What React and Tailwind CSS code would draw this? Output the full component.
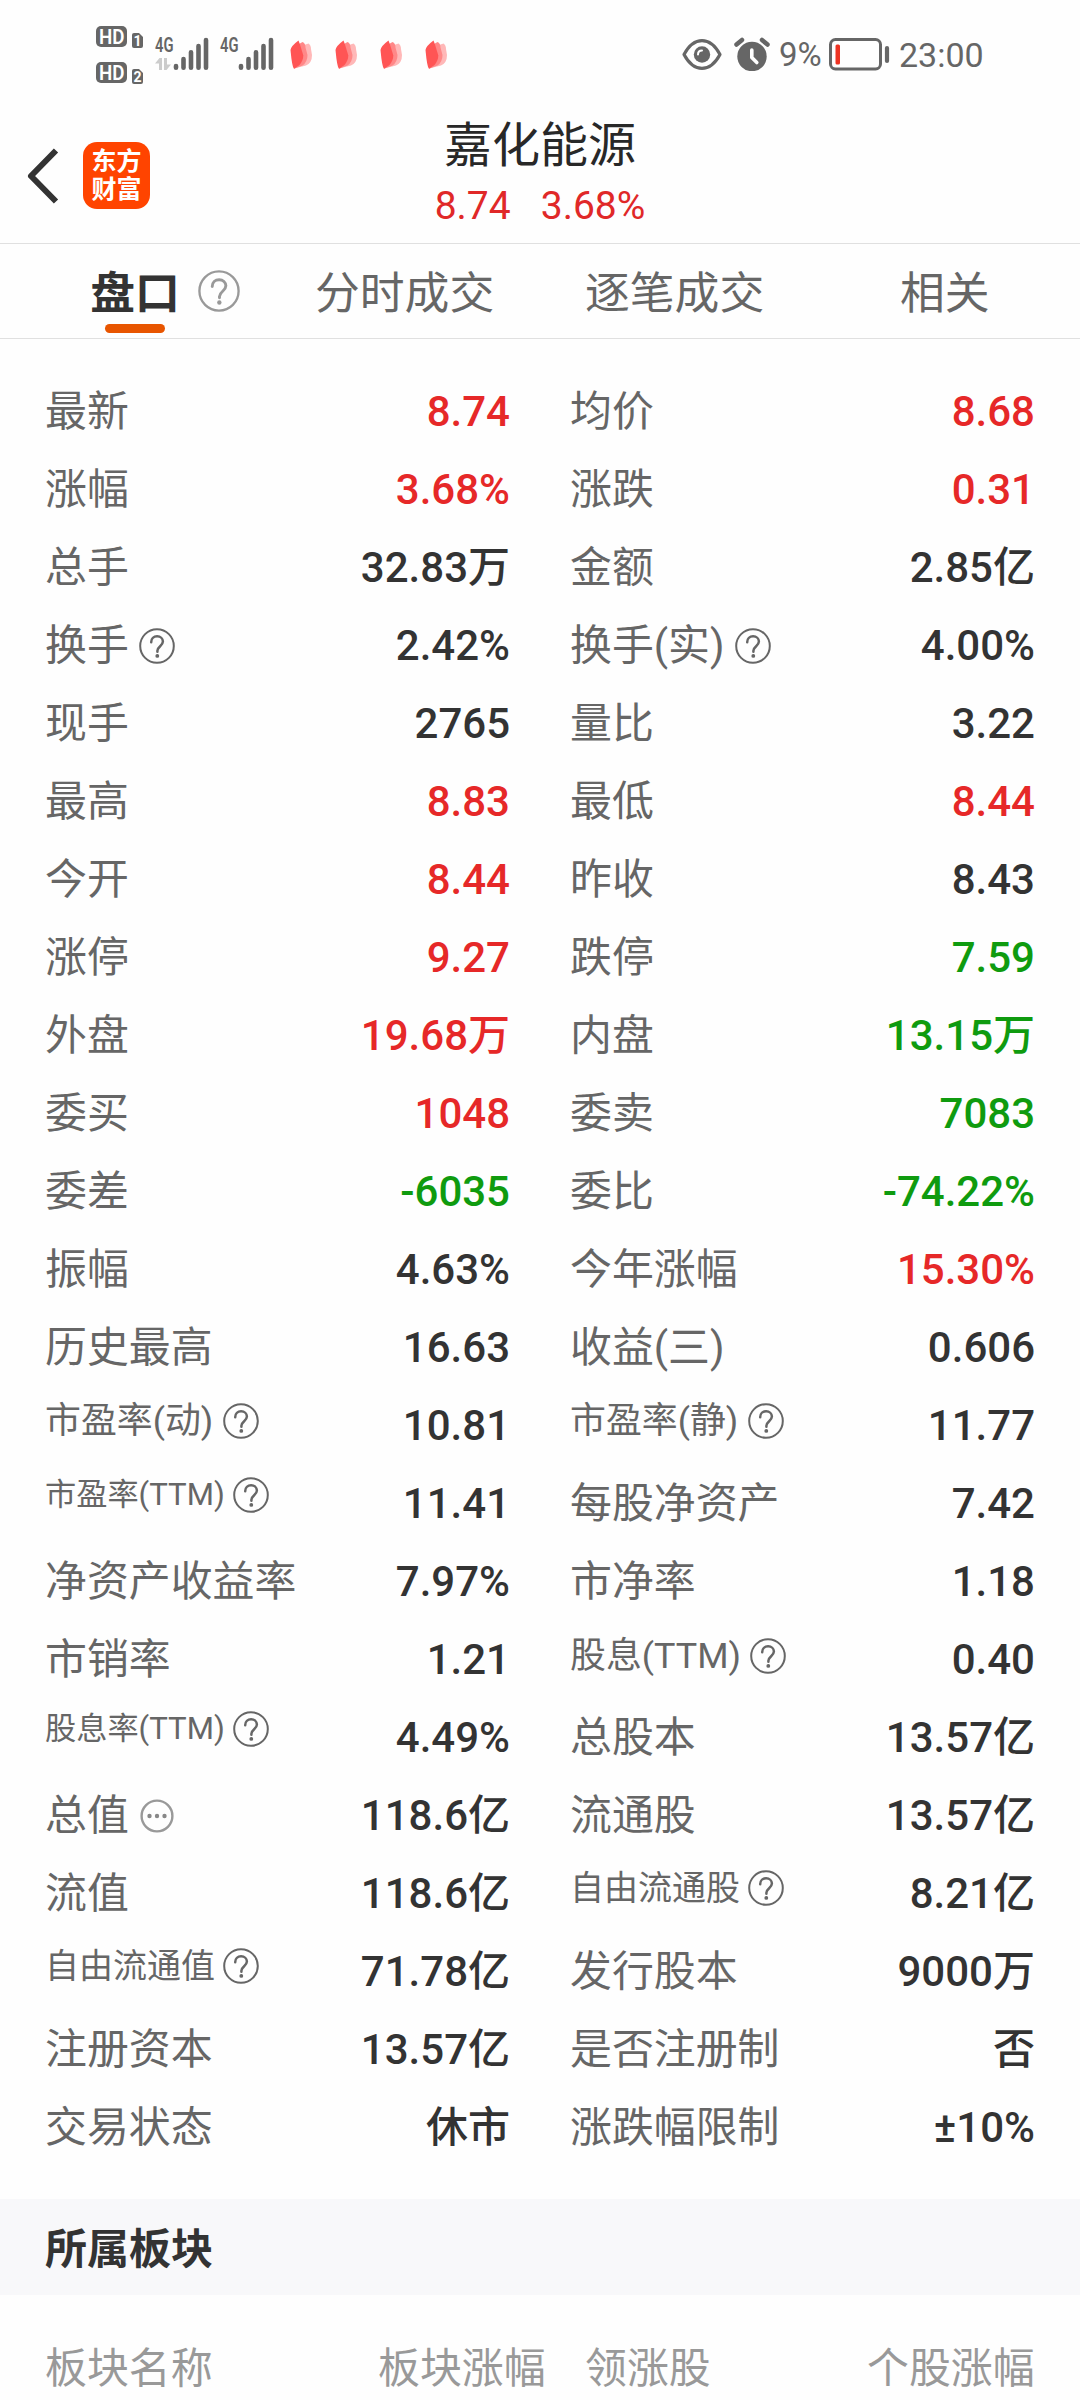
import React from "react";

const TONES = {
  red: "text-[#e62828]",
  green: "text-[#0f9b0f]",
  dark: "text-[#333333]",
};

// size: label size step; the bottom padding lifts small labels above the row's centre line
const LABELS = {
  base: "text-[41.9px]",
  md: "text-[35.9px] pb-[10px]",
  mid: "text-[35.9px] pb-[9px]",
  sm: "text-[34px] pb-[13px]",
  xs: "text-[31.2px] pb-[18px]",
};

const ROWS = [
  [["最新", "8.74", "red"], ["均价", "8.68", "red"]],
  [["涨幅", "3.68%", "red"], ["涨跌", "0.31", "red"]],
  [["总手", "32.83万", "dark"], ["金额", "2.85亿", "dark"]],
  [["换手", "2.42%", "dark", "base", "help", "ml-[10px]"], ["换手(实)", "4.00%", "dark", "base", "help", "ml-[10px]"]],
  [["现手", "2765", "dark"], ["量比", "3.22", "dark"]],
  [["最高", "8.83", "red"], ["最低", "8.44", "red"]],
  [["今开", "8.44", "red"], ["昨收", "8.43", "dark"]],
  [["涨停", "9.27", "red"], ["跌停", "7.59", "green"]],
  [["外盘", "19.68万", "red"], ["内盘", "13.15万", "green"]],
  [["委买", "1048", "red"], ["委卖", "7083", "green"]],
  [["委差", "-6035", "green"], ["委比", "-74.22%", "green"]],
  [["振幅", "4.63%", "dark"], ["今年涨幅", "15.30%", "red"]],
  [["历史最高", "16.63", "dark"], ["收益(三)", "0.606", "dark"]],
  [["市盈率(动)", "10.81", "dark", "md", "help", "ml-[10px]"], ["市盈率(静)", "11.77", "dark", "md", "help", "ml-[10px]"]],
  [["市盈率(TTM)", "11.41", "dark", "xs", "help", "ml-[8px]"], ["每股净资产", "7.42", "dark"]],
  [["净资产收益率", "7.97%", "dark"], ["市净率", "1.18", "dark"]],
  [["市销率", "1.21", "dark"], ["股息(TTM)", "0.40", "dark", "mid", "help", "ml-[9px]"]],
  [["股息率(TTM)", "4.49%", "dark", "xs", "help", "ml-[8px]"], ["总股本", "13.57亿", "dark"]],
  [["总值", "118.6亿", "dark", "base", "more", "ml-[11px]"], ["流通股", "13.57亿", "dark"]],
  [["流值", "118.6亿", "dark"], ["自由流通股", "8.21亿", "dark", "sm", "help", "ml-[8px]"]],
  [["自由流通值", "71.78亿", "dark", "sm", "help", "ml-[8px]"], ["发行股本", "9000万", "dark"]],
  [["注册资本", "13.57亿", "dark"], ["是否注册制", "否", "dark"]],
  [["交易状态", "休市", "dark"], ["涨跌幅限制", "±10%", "dark"]],
];

function HelpIcon({ className }) {
  return (
    <svg viewBox="0 0 36 36" className={className} fill="none" stroke="currentColor" strokeWidth="2">
      <circle cx="18" cy="18" r="16.8" />
      <path d="M12.200 14.200c0-3.600 2.600-5.900 5.900-5.900s5.800 2.300 5.800 5.300c0 4.400-5.500 4.800-5.500 9.200v1" strokeWidth="2.500" strokeLinecap="round" />
      <circle cx="18.3" cy="27.9" r="1.9" fill="currentColor" stroke="none" />
    </svg>
  );
}

function MoreIcon({ className }) {
  return (
    <svg viewBox="0 0 34 34" className={className} fill="none" stroke="#999999" strokeWidth="2.4">
      <circle cx="17" cy="17" r="15.4" />
      <g fill="#888888" stroke="none">
        <circle cx="9.5" cy="17" r="2.2" />
        <circle cx="17" cy="17" r="2.2" />
        <circle cx="24.5" cy="17" r="2.2" />
      </g>
    </svg>
  );
}

function HdBadge({ sim }) {
  return (
    <svg width="50" height="30" viewBox="0 0 50 30" className="overflow-visible">
      <rect x="0" y="4" width="31" height="21" rx="5" fill="#666" />
      <text x="3" y="21.800" textLength="25.500" lengthAdjust="spacingAndGlyphs" fontSize="20.500" fontWeight="600" fill="#fff">HD</text>
      <path d="M36 13q0-2 2-2h5l4 4v9q0 2-2 2h-7q-2 0-2-2z" fill="#666" />
      <text x="41.500" y="23.800" textAnchor="middle" fontSize="14" fontWeight="700" fill="#fff">{sim}</text>
    </svg>
  );
}

function Signal({ arrows }) {
  return (
    <svg width="54" height="46" viewBox="0 -10 54 46" className="overflow-visible">
      <text x="0" y="17" textLength="18.5" lengthAdjust="spacingAndGlyphs" fontSize="20.5" fontWeight="600" fill="#666">4G</text>
      {arrows && (
        <g fill="#cccccc">
          <path d="M0 28.500l4.500-5.500H7v12H4v-6.500z" />
          <path d="M9 23h3v6.500h4L11.500 35H9z" />
        </g>
      )}
      <g stroke="#666" strokeWidth="4.600" strokeLinecap="round">
        <path d="M21 31v1.700M28.500 24v8.700M36 17.300v15.400M43.500 11v21.700M51 5v27.700" />
      </g>
    </svg>
  );
}

function Petals() {
  return (
    <svg width="24" height="30" viewBox="0 0 24 30">
      <path d="M4 28.500L11 6l7.500-2.500Q21 5 21 9l1 6q0 8-6 10.500L4 28.500z" fill="#ffb8b8" />
      <path d="M4 28.700L9 4l3.500-2Q15.500 3 15.500 7.500l2 7.500q0 7-5 10.500z" fill="#ff8888" />
      <path d="M0.500 10Q1 6 8.500 0.500L10 4.500l3.300 11q0 5-3.800 9.500L4 28.700Q2 27 0.500 10z" fill="#ff5555" />
    </svg>
  );
}

function StatusBar() {
  return (
    <div className="flex h-[110px] items-start justify-between pl-24 pr-[96px] text-[#666]">
      <div className="flex">
        <div className="mt-[22px] flex w-[59px] flex-col gap-[6px]">
          <HdBadge sim="1" />
          <HdBadge sim="2" />
        </div>
        <div className="mt-[25px] flex gap-[11px]">
          <Signal arrows />
          <Signal />
        </div>
        <div className="ml-[16px] mt-[40px] flex gap-[21px]">
          <Petals />
          <Petals />
          <Petals />
          <Petals />
        </div>
      </div>
      <div className="flex pt-[37px]">
        <svg width="40" height="34" viewBox="0 0 40 34" fill="none" stroke="#666">
          <path d="M2 17.500C12-1 28-1 38 17.500C28 36 12 36 2 17.500z" strokeWidth="3.200" strokeLinejoin="round" />
          <circle cx="20" cy="17.500" r="8.200" fill="#666" stroke="none" />
          <path d="M16 17.500q0-4 4-4" stroke="#fff" strokeWidth="2" strokeLinecap="round" />
        </svg>
        <svg width="36" height="34" viewBox="0 0 36 34" className="ml-[12px]">
          <circle cx="18" cy="19.500" r="14.700" fill="#666" />
          <path d="M2.500 7.500l5.500-4.500M33.500 7.500L28 3" stroke="#666" strokeWidth="4.500" strokeLinecap="round" />
          <path d="M17.800 13v7.500l5 5" stroke="#fff" strokeWidth="3.600" fill="none" strokeLinecap="round" strokeLinejoin="round" />
        </svg>
        <span className="ml-[9px] w-[44px] text-[33px] leading-[36px]">9%</span>
        <svg width="62" height="34" viewBox="0 0 62 34" className="ml-[6px]">
          <rect x="1.500" y="2.500" width="50" height="29.500" rx="5" fill="none" stroke="#666" strokeWidth="3" />
          <rect x="6.500" y="7.500" width="4.500" height="20" rx="1.500" fill="#ee3322" />
          <path d="M58 11v13" stroke="#666" strokeWidth="4.200" strokeLinecap="round" />
        </svg>
        <span className="ml-[8px] w-[85px] text-[34px] leading-[36px]">23:00</span>
      </div>
    </div>
  );
}

function Header() {
  return (
    <header className="grid h-[134px] grid-cols-[1fr_auto_1fr] border-b border-[#e0e0e0]">
      <div className="flex items-start pl-[26px] pt-[32px]">
        <svg width="34" height="56" viewBox="0 0 34 56" fill="none" stroke="#333" strokeWidth="6" className="mt-[6px]">
          <path d="M30 2.500L5 28l25 25.500" strokeLinejoin="round" />
        </svg>
        <div className="ml-[23px] flex h-[67px] w-[67px] flex-col items-center justify-center rounded-[14px] bg-[#ff4400] text-[25px] font-bold leading-[28px] text-white">
          <span>东方</span>
          <span>财富</span>
        </div>
      </div>
      <div className="flex flex-col items-center">
        <h1 className="mt-[8px] text-[48px] leading-[56px] text-[#282828]">嘉化能源</h1>
        <div className="mt-[9px] flex gap-[30px] text-[39px] leading-[46px] text-[#e02828]">
          <span>8.74</span>
          <span>3.68%</span>
        </div>
      </div>
      <div />
    </header>
  );
}

function Tabs() {
  return (
    <nav className="flex h-[95px] border-b border-[#e0e0e0] text-[44.800px] leading-[60px] text-[#666]">
      <div className="ml-[90px] mt-5 flex w-[225px]">
        <div className="flex w-[90px] flex-col items-center font-bold text-[#333]">
          <span className="h-[60px]">盘口</span>
          <span className="h-[9px] w-[60px] rounded-full bg-[#e85500]" />
        </div>
        <HelpIcon className="ml-[18px] mt-[6px] size-[42px] text-[#999]" />
      </div>
      <span className="mt-5 w-[270px]">分时成交</span>
      <span className="mt-5 w-[315px]">逐笔成交</span>
      <span className="mt-5">相关</span>
    </nav>
  );
}

function Cell({ data }) {
  const [label, value, tone, size = "base", icon, gap] = data;
  return (
    <div className="flex h-[78px] items-center justify-between">
      <div className={"flex items-center whitespace-nowrap leading-[60px] text-[#666] " + LABELS[size]}>
        <span>{label}</span>
        {icon === "help" && <HelpIcon className={"size-9 " + gap} />}
        {icon === "more" && <MoreIcon className={"size-[34px] " + gap} />}
      </div>
      <span className={"text-[42px] font-medium leading-[60px] " + TONES[tone]}>{value}</span>
    </div>
  );
}

export default function App() {
  return (
    <div className="h-[2400px] w-[1080px] overflow-hidden bg-[#fefefe] font-[Roboto,'Noto_Sans_CJK_SC',sans-serif]">
      <StatusBar />
      <Header />
      <Tabs />
      <main className="grid grid-cols-[465px_465px] gap-x-[60px] pl-[45px] pt-[34px]">
        {ROWS.flat().map((data) => (
          <Cell key={data[0]} data={data} />
        ))}
      </main>
      <h2 className="mt-8 flex h-24 items-center bg-[#f8f8fa] pl-[45px] pt-1 text-[42px] font-bold text-[#333]">所属板块</h2>
      <div className="flex pl-[45px] pt-[44px] text-[41.900px] leading-[60px] text-[#999]">
        <span className="w-[333px]">板块名称</span>
        <span className="w-[207px]">板块涨幅</span>
        <span className="w-[282px]">领涨股</span>
        <span>个股涨幅</span>
      </div>
    </div>
  );
}
